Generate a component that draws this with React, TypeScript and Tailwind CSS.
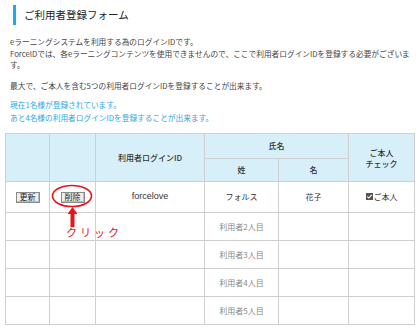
import { Fragment } from 'react';

const cell = 'border border-[#d0d0d0] text-center align-middle';

function SmallButton({ label }: { label: string }) {
  return (
    <span className="inline-flex h-[11px] items-center border border-[#8a8a8a] bg-[#eeeeee] px-[3px] text-[8px] leading-none text-[#222] shadow-[inset_-1px_-1px_0_#bbb]">
      {label}
    </span>
  );
}

export default function App() {
  const emptyRows = ['利用者2人目', '利用者3人目', '利用者4人目', '利用者5人目'];

  return (
    <div
      className="relative h-[328px] w-[420px] overflow-hidden bg-white text-[#333]"
      style={{ fontFamily: '"Noto Sans CJK JP", "Liberation Sans", sans-serif' }}
    >
      <div className="flex items-center gap-[8px] pl-[13px] pt-[5px]">
        <div className="h-[20px] w-[3px] bg-[#16b0e8]" />
        <h1 className="text-[10.5px] leading-none text-[#222]">ご利用者登録フォーム</h1>
      </div>

      <div className="px-[10px] pt-[11px] text-[7.7px] leading-[11.5px] text-[#444]">
        <p>eラーニングシステムを利用する為のログインIDです。</p>
        <p>ForceIDでは、各eラーニングコンテンツを使用できませんので、ここで利用者ログインIDを登録する必要がございます。</p>
        <p className="mt-[9px]">最大で、ご本人を含む5つの利用者ログインIDを登録することが出来ます。</p>
        <div className="mt-[8px] leading-[12.5px] text-[#2aa8e6]">
          <p>現在1名様が登録されています。</p>
          <p>あと4名様の利用者ログインIDを登録することが出来ます。</p>
        </div>
      </div>

      <div className="pl-[5px] pt-[9px]">
        <table className="w-[410px] table-fixed border-collapse border border-[#dcdcdc] text-[8px] text-[#333]">
          <colgroup>
            <col className="w-[44px]" />
            <col className="w-[46px]" />
            <col className="w-[109px]" />
            <col className="w-[74px]" />
            <col className="w-[70px]" />
            <col />
          </colgroup>
          <thead>
            <tr className="h-[25px] bg-[#d7eff8]">
              <th rowSpan={2} className={cell} />
              <th rowSpan={2} className={cell} />
              <th rowSpan={2} className={`${cell} font-medium`}>利用者ログインID</th>
              <th colSpan={2} className={`${cell} font-medium`}>氏名</th>
              <th rowSpan={2} className={`${cell} font-medium leading-[11px]`}>
                ご本人
                <br />
                チェック
              </th>
            </tr>
            <tr className="h-[23px] bg-[#d7eff8]">
              <th className={`${cell} font-medium`}>姓</th>
              <th className={`${cell} font-medium`}>名</th>
            </tr>
          </thead>
          <tbody>
            <tr className="h-[31px]">
              <td className={cell}>
                <SmallButton label="更新" />
              </td>
              <td className={cell}>
                <SmallButton label="削除" />
              </td>
              <td className={`${cell} text-[9px]`} style={{ fontFamily: '"Liberation Sans", sans-serif' }}>
                forcelove
              </td>
              <td className={cell}>フォルス</td>
              <td className={cell}>花子</td>
              <td className={cell}>
                <span className="inline-flex items-center gap-[1px]">
                  <span className="relative inline-block h-[7px] w-[7px] bg-[#555]">
                    <svg viewBox="0 0 7 7" className="absolute inset-0 h-[7px] w-[7px]">
                      <path d="M1.3 3.6 L2.8 5 L5.7 1.8" fill="none" stroke="#fff" strokeWidth="1.1" />
                    </svg>
                  </span>
                  ご本人
                </span>
              </td>
            </tr>
            {emptyRows.map((label) => (
              <Fragment key={label}>
                <tr className="h-[28px]">
                  <td className={cell} />
                  <td className={cell} />
                  <td className={cell} />
                  <td className={`${cell} text-[#888]`}>{label}</td>
                  <td className={cell} />
                  <td className={cell} />
                </tr>
              </Fragment>
            ))}
          </tbody>
        </table>
      </div>

      {/* click annotation */}
      <svg className="absolute left-[51px] top-[184px]" width="44" height="26" viewBox="0 0 44 26">
        <ellipse cx="21" cy="12" rx="19.5" ry="10.5" fill="none" stroke="#e8141c" strokeWidth="1.6" />
      </svg>
      <svg className="absolute left-[67px] top-[207px]" width="11" height="20" viewBox="0 0 11 20">
        <path d="M5.5 0 L10.5 7 L7.5 7 L7.5 20 L3.5 20 L3.5 7 L0.5 7 Z" fill="#e8141c" />
      </svg>
      <div className="absolute left-[66px] top-[227px] text-[11px] leading-none tracking-[3px] text-[#e8141c]">
        クリック
      </div>
    </div>
  );
}
